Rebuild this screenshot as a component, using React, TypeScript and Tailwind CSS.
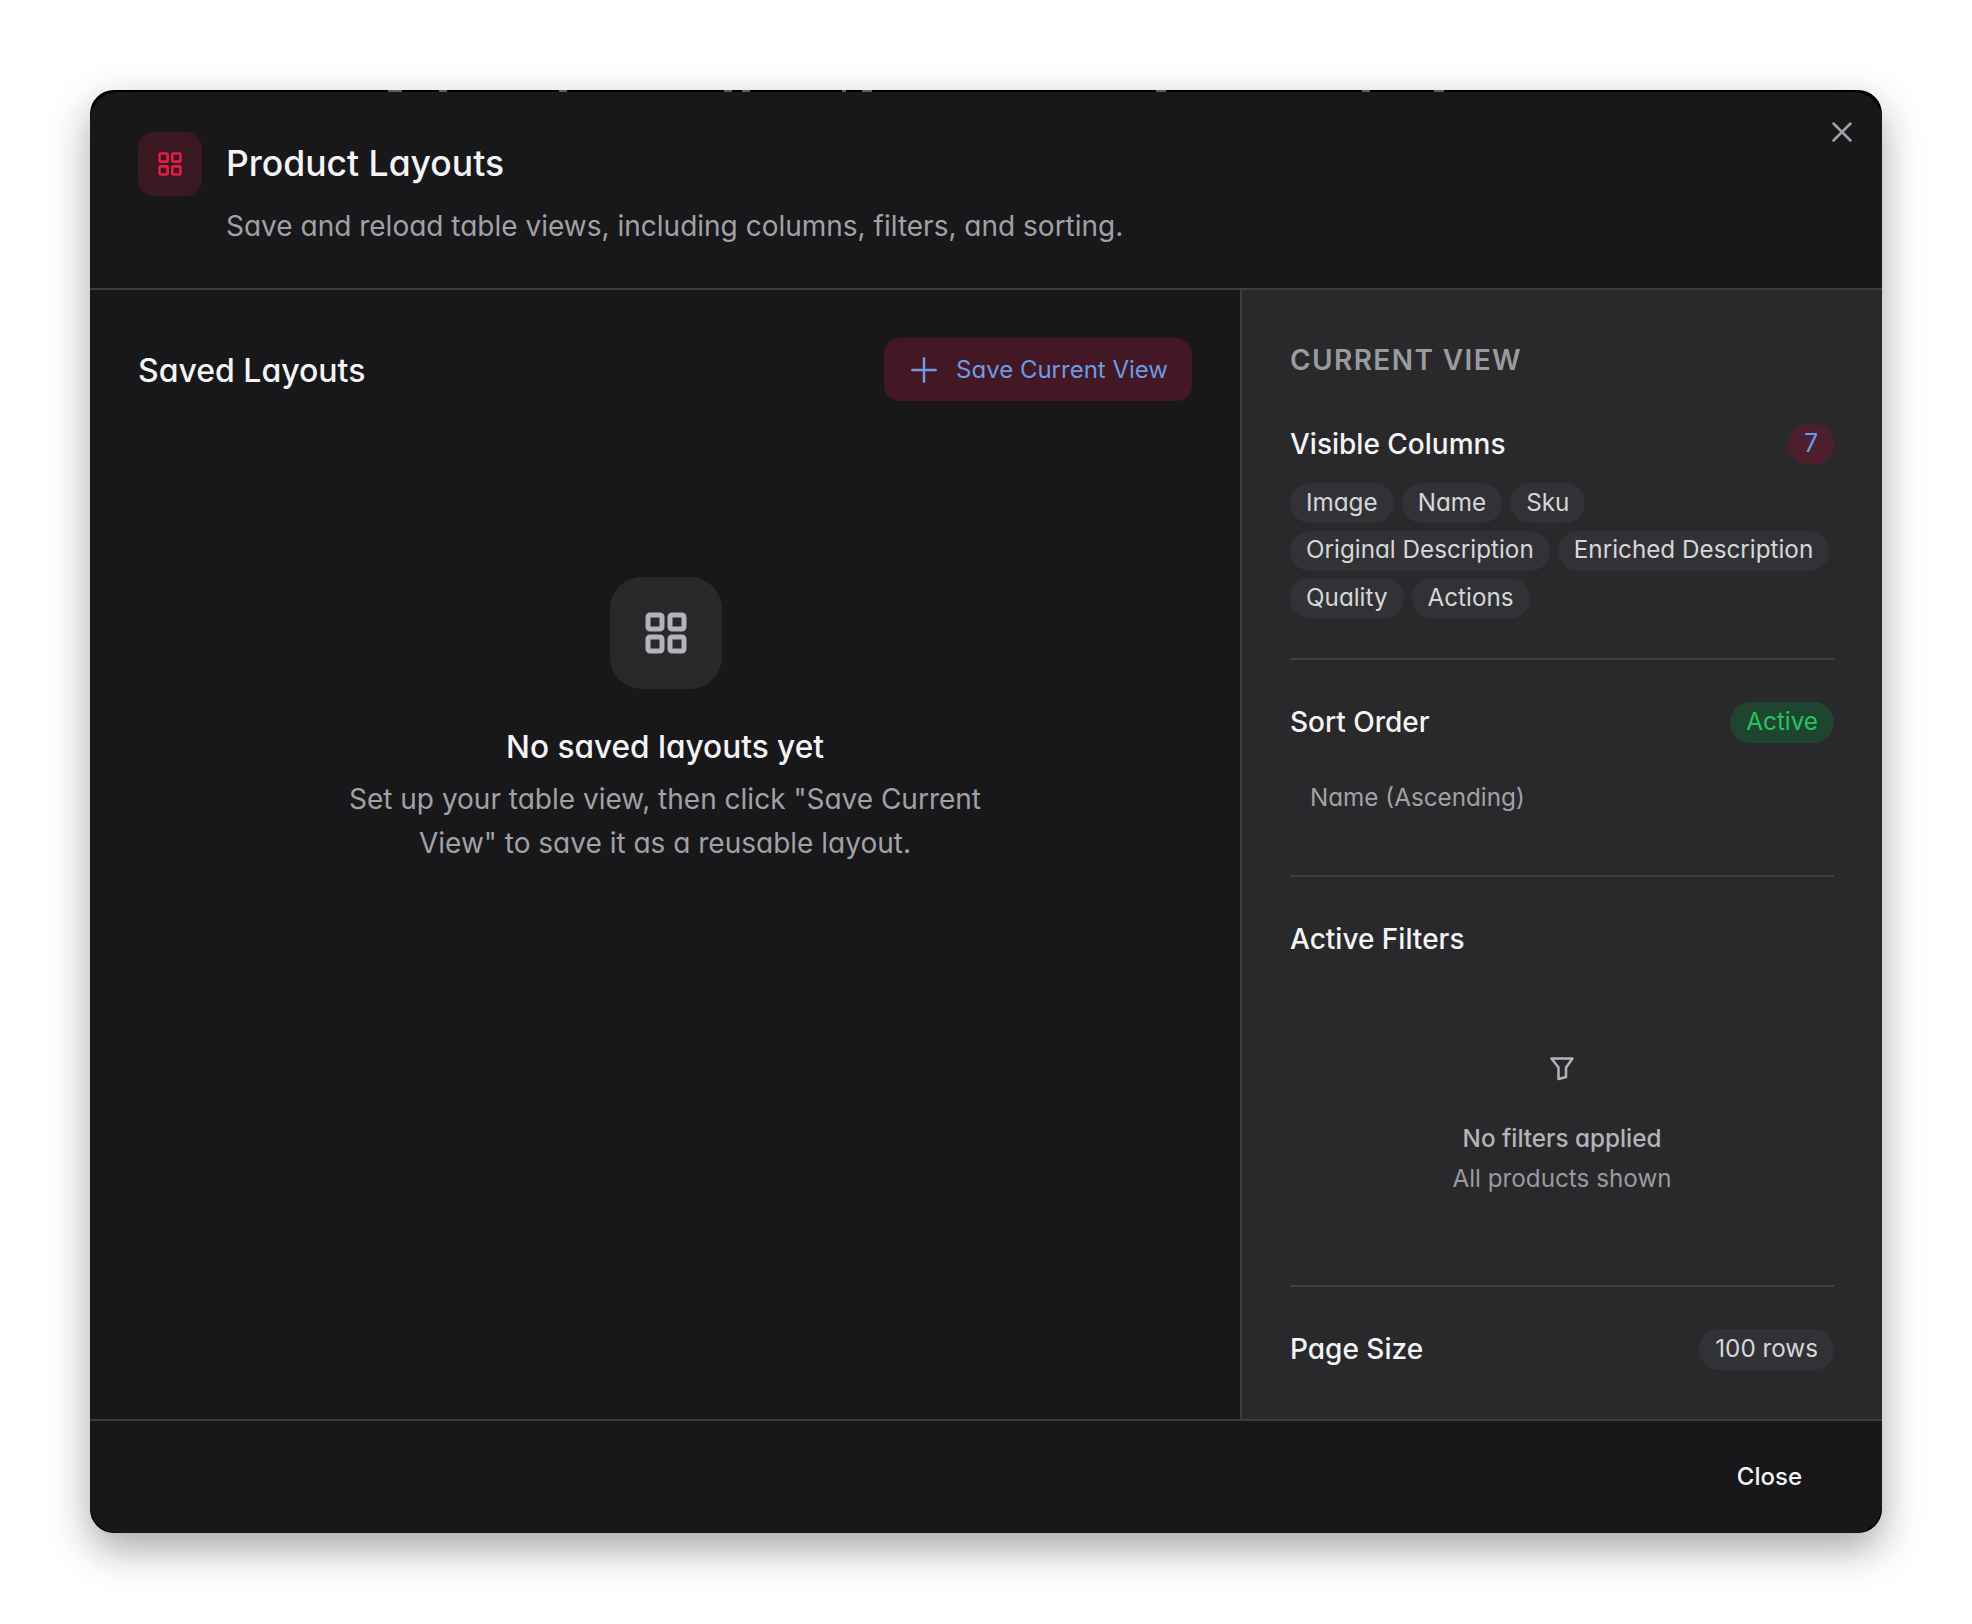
import { LayoutGrid, Plus, X } from 'lucide-react';

const columns = ['Image', 'Name', 'Sku', 'Original Description', 'Enriched Description', 'Quality', 'Actions'];

// bits of the page behind that peek through the top edge of the dialog
const edgeMarks = [
    { left: 'left-[298px]', width: 'w-[14px]' },
    { left: 'left-[349px]', width: 'w-[8px]' },
    { left: 'left-[469px]', width: 'w-[8px]' },
    { left: 'left-[634px]', width: 'w-[8px]' },
    { left: 'left-[652px]', width: 'w-[8px]' },
    { left: 'left-[752px]', width: 'w-[4px]' },
    { left: 'left-[772px]', width: 'w-[10px]' },
    { left: 'left-[1066px]', width: 'w-[10px]' },
    { left: 'left-[1344px]', width: 'w-[10px]' },
    { left: 'left-[1272px]', width: 'w-[8px]' },
];

function Chip({ label }: { label: string }) {
    return <span className="flex h-10 items-center rounded-full bg-[#323236] px-4 text-[24.25px] text-[#d6d6d9]">{label}</span>;
}

function FilterIcon() {
    return (
        <svg viewBox="0 0 24 24" fill="none" stroke="currentColor" strokeWidth={2.5} strokeLinejoin="round" className="my-[2px] h-6 w-6 text-[#b4b4b8]">
            <path d="M1.5 1.5H22.5L16 10.5V20L8.5 22V10.5Z" />
        </svg>
    );
}

export default function App() {
    return (
        <div className="min-h-[1624px] bg-white pt-[90px] pl-[90px] font-['Inter',sans-serif] [font-feature-settings:'cv11']">
            <div className="relative h-[1443px] w-[1792px] rounded-[24px] bg-black pt-[2px] shadow-[0_16px_40px_rgba(0,0,0,0.35)]">
                {edgeMarks.map((m) => (
                    <span key={m.left} className={`absolute top-0 h-[2px] bg-[#5f5f62] ${m.left} ${m.width}`} />
                ))}
                <div className="relative flex h-full flex-col overflow-hidden rounded-[28px] bg-[#18181b]">
                    <button className="absolute top-[23px] right-[23px] text-[#a1a1a6]">
                        <X size={34} strokeWidth={1.75} />
                    </button>

                    <header className="flex h-[198px] shrink-0 gap-6 border-b-2 border-[#3d3d40] px-12 pt-[40px]">
                        <div className="flex h-16 w-16 items-center justify-center rounded-[16px] bg-[#3a1822] text-[#e11d48]">
                            <LayoutGrid size={28} strokeWidth={2.25} />
                        </div>
                        <div className="pt-[2px]">
                            <h1 className="text-[35.5px] leading-[60px] font-medium text-[#f4f4f5]">Product Layouts</h1>
                            <p className="mt-[10px] text-[28px] leading-[44px] text-[#a1a1a6]">
                                Save and reload table views, including columns, filters, and sorting.
                            </p>
                        </div>
                    </header>

                    <div className="flex min-h-0 flex-1">
                        <section className="flex flex-1 flex-col p-12">
                            <div className="flex items-center justify-between">
                                <h2 className="mt-[2px] text-[32px] font-medium text-[#f4f4f5]">Saved Layouts</h2>
                                <button className="flex h-[63px] items-center gap-3 rounded-[16px] bg-[#431824] pr-6 pl-5 text-[24px] text-[#6c9be6]">
                                    <Plus size={40} strokeWidth={1.5} />
                                    Save Current View
                                </button>
                            </div>
                            <div className="mt-[176px] flex flex-col items-center text-center">
                                <div className="ml-[2px] flex h-[112px] w-[112px] items-center justify-center rounded-[32px] bg-[#29292c] text-[#b4b4b8]">
                                    <LayoutGrid size={48} strokeWidth={2.5} />
                                </div>
                                <h3 className="mt-[36px] text-[31.6px] leading-[44px] font-medium text-[#f4f4f5]">No saved layouts yet</h3>
                                <p className="mt-[8px] w-[680px] text-[28px] leading-[44px] text-[#a1a1a6]">
                                    Set up your table view, then click "Save Current View" to save it as a reusable layout.
                                </p>
                            </div>
                        </section>

                        <aside className="w-[642px] shrink-0 border-l-2 border-[#3d3d40] bg-[#29292c] px-12 pt-[52px]">
                            <h2 className="text-[28px] leading-[36px] font-semibold tracking-[1.4px] text-[#9a9a9f]">CURRENT VIEW</h2>

                            <div className="mt-[45px] flex items-center justify-between">
                                <h3 className="text-[28px] font-medium text-[#f4f4f5]">Visible Columns</h3>
                                <span className="flex h-[41px] w-[46px] items-center justify-center rounded-full bg-[#4d1f2e] text-[25px] text-[#6c9be6]">7</span>
                            </div>
                            <div className="mt-[18px] flex flex-wrap gap-x-2 gap-y-[7.5px] border-b-2 border-[#3f3f43] pb-[40px]">
                                {columns.map((c) => (
                                    <Chip key={c} label={c} />
                                ))}
                            </div>

                            <div className="mt-[41px] flex items-center justify-between">
                                <h3 className="text-[28px] font-medium text-[#f4f4f5]">Sort Order</h3>
                                <span className="flex h-[41px] items-center rounded-full bg-[#1f4531] px-4 text-[24.25px] text-[#22c55e]">Active</span>
                            </div>
                            <div className="border-b-2 border-[#3f3f43] pt-[37px] pb-[59px] pl-5 text-[24.25px] leading-[36px] text-[#a1a1a6]">Name (Ascending)</div>

                            <h3 className="mt-[45px] text-[28px] leading-[34px] font-medium text-[#f4f4f5]">Active Filters</h3>
                            <div className="flex h-[331px] flex-col items-center border-b-2 border-[#3f3f43] pt-[99px] text-center">
                                <FilterIcon />
                                <p className="mt-[38px] text-[24.25px] leading-[36px] font-medium text-[#b4b4b8]">No filters applied</p>
                                <p className="mt-[4px] text-[24.25px] leading-[36px] text-[#9a9a9f]">All products shown</p>
                            </div>

                            <div className="mt-[41px] flex items-center justify-between">
                                <h3 className="text-[28px] font-medium text-[#f4f4f5]">Page Size</h3>
                                <span className="flex h-[41px] items-center rounded-full bg-[#323236] px-4 text-[24.25px] text-[#d6d6d9]">100 rows</span>
                            </div>
                        </aside>
                    </div>

                    <footer className="flex h-[114px] shrink-0 items-center justify-end border-t-2 border-[#3d3d40] pr-20">
                        <button className="text-[24px] font-medium text-[#f4f4f5]">Close</button>
                    </footer>
                </div>
            </div>
        </div>
    );
}
